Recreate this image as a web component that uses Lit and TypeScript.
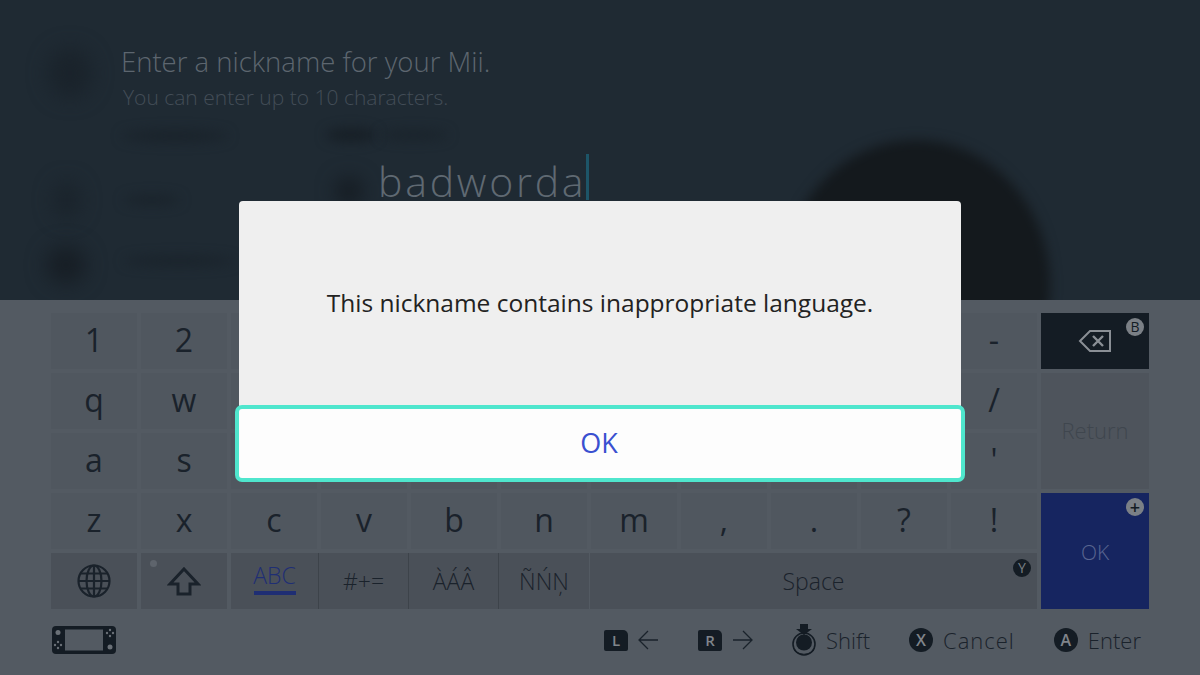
import { LitElement, html, css } from "lit";
import { customElement } from "lit/decorators.js";

const rows = [
  ["1","2","3","4","5","6","7","8","9","0","-"],
  ["q","w","e","r","t","y","u","i","o","p","/"],
  ["a","s","d","f","g","h","j","k","l",":","'"],
  ["z","x","c","v","b","n","m",",",".","?","!"],
];

const globe = html`<svg width="36" height="36" viewBox="0 0 36 36" fill="none" stroke="#1a222b" stroke-width="2.2"><circle cx="18" cy="18" r="15.5"/><ellipse cx="18" cy="18" rx="7.5" ry="15.5"/><path d="M18 2.5v31M4.500 10.500h27M2.500 18h31M4.500 25.500h27"/></svg>`;
const shift = html`<svg width="34" height="30" viewBox="0 0 34 30" fill="none" stroke="#1a222b" stroke-width="3" stroke-linejoin="miter"><path d="M17 3 31 18H23V28H11V18H3Z"/></svg>`;
const back = html`<svg width="34" height="24" viewBox="0 0 34 24" fill="none" stroke="#8a8f95" stroke-width="2"><path d="M32 2H12L2 12l10 10h20Z"/><path d="M15 7l10 10M25 7 15 17" stroke-width="2.4"/></svg>`;
const device = html`<svg width="66" height="30" viewBox="0 0 66 30"><rect x="1" y="1" width="64" height="28" rx="4" fill="#141c24"/><rect x="14" y="4.500" width="38" height="21" fill="#535a62"/><g fill="#6a7077"><circle cx="7" cy="7.500" r="2.500"/><circle cx="59" cy="22" r="2.500"/><circle cx="7" cy="17" r="1.200"/><circle cx="4" cy="20" r="1.200"/><circle cx="10" cy="20" r="1.200"/><circle cx="7" cy="23" r="1.200"/><circle cx="59" cy="5" r="1.200"/><circle cx="56" cy="8" r="1.200"/><circle cx="62" cy="8" r="1.200"/><circle cx="59" cy="11" r="1.200"/></g></svg>`;
const left = html`<svg width="21" height="20" viewBox="0 0 21 20" fill="none" stroke="#1a222b" stroke-width="1.300"><path d="M20 10H1M10 1 1 10l9 9"/></svg>`;
const right = html`<svg width="21" height="20" viewBox="0 0 21 20" fill="none" stroke="#1a222b" stroke-width="1.300"><path d="M1 10h19M11 1l9 9-9 9"/></svg>`;
const ring = html`<svg width="24" height="32" viewBox="0 0 24 32"><path d="M8 0h8v5h4l-8 6-8-6h4Z" fill="#141c24"/><circle cx="12" cy="20" r="11" fill="none" stroke="#141c24" stroke-width="1.600"/><circle cx="12" cy="18.500" r="8" fill="#141c24"/><path d="M2 25a11 8 0 0 0 20 0v1.500a11 6 0 0 1-20 0Z" fill="#141c24"/></svg>`;

@customElement("app-root")
export class AppRoot extends LitElement {
  static styles = css`
    :host { display: block; width: 1200px; height: 675px; overflow: hidden; position: relative; font-family: "Open Sans", "Noto Sans", sans-serif; }
    .top { height: 300px; background: #1f2a33; position: relative; overflow: hidden; box-sizing: border-box; padding: 42px 0 0 121px; }
    .blob { position: absolute; background: #1a232b; border-radius: 50%; filter: blur(10px); }
    .b1 { left: 48px; top: 48px; width: 44px; height: 50px; }
    .b2 { left: 54px; top: 182px; width: 26px; height: 36px; }
    .b3 { left: 46px; top: 246px; width: 40px; height: 38px; background: #171e25; }
    .b4 { left: 122px; top: 130px; width: 106px; height: 12px; filter: blur(6px); }
    .b5 { left: 326px; top: 128px; width: 50px; height: 14px; filter: blur(6px); background: #171f26; }
    .b9 { left: 380px; top: 130px; width: 68px; height: 10px; filter: blur(6px); }
    .b6 { left: 124px; top: 195px; width: 56px; height: 10px; filter: blur(6px); }
    .b7 { left: 124px; top: 256px; width: 110px; height: 10px; filter: blur(6px); }
    .b8 { left: 336px; top: 178px; width: 26px; height: 26px; background: #141a20; }
    .mii { left: 782px; top: 140px; width: 268px; height: 290px; background: #14191d; filter: blur(6px); }
    .title { position: relative; font-size: 27.5px; font-weight: 300; line-height: 40px; color: #5d666f; }
    .sub { position: relative; font-size: 21px; font-weight: 300; line-height: 28px; color: #434d57; margin: 1px 0 0 2px; }
    .input { position: absolute; left: 378px; top: 154px; display: flex; height: 46px; }
    .word { font-size: 41px; font-weight: 300; line-height: 54px; color: #5f6972; letter-spacing: 2.75px; }
    .caret { width: 3px; height: 46px; background: #1d5568; }
    .kb { height: 375px; background: #535a62; box-sizing: border-box; padding: 13px 51px 0; display: flex; flex-direction: column; }
    .board { display: grid; grid-template-columns: repeat(11, 86px) 108px; grid-auto-rows: 56px; gap: 4px; }
    .key { background: #50575f; color: #1a222b; display: flex; align-items: center; justify-content: center; font-size: 32px; font-weight: 400; padding-bottom: 2px; box-sizing: border-box; position: relative; line-height: 1; }
    .fn { background: #4a5058; font-size: 23px; padding-bottom: 0; font-weight: 300; }
    .group { grid-column: span 4; display: grid; grid-template-columns: 87px 90px 90px 91px; margin-right: -2px; background: #4a5058; }
    .group .key { background: transparent; border-left: 1px solid #3d434a; }
    .group .key:first-child { border-left: 0; }
    .abc { flex-direction: column; color: #1f2e74; font-size: 23px; font-weight: 300; padding-bottom: 3px; gap: 4px; }
    .abc i { width: 42px; height: 4px; background: #1f2e74; }
    .space { grid-column: span 5; margin-left: -1px; }
    .del { background: #141c24; padding-bottom: 0; }
    .ret { grid-row: span 2; background: #4e545c; color: #3f464e; font-size: 22px; font-weight: 300; padding-bottom: 3px; }
    .ok { grid-row: span 2; background: #162560; color: #5a6590; font-size: 21px; font-weight: 300; padding: 3px 0 0; }
    .badge { position: absolute; width: 18px; height: 18px; border-radius: 50%; background: #7b8086; color: #141c24; font-size: 14px; font-weight: 400; display: flex; align-items: center; justify-content: center; top: 5px; right: 5px; }
    .plus { font-size: 18px; font-weight: 600; }
    .y { background: #141c24; color: #7b8086; right: 6px; top: 6px; }
    .dot { position: absolute; left: 9px; top: 7px; width: 7px; height: 7px; border-radius: 50%; background: #5e646c; }
    .foot { display: flex; align-items: center; height: 32px; margin-top: 15px; }
    .actions { margin-left: auto; display: flex; align-items: center; margin-right: 8px; color: #1a222b; font-size: 22px; font-weight: 300; }
    .act { display: flex; align-items: center; gap: 10px; }
    .act + .act { margin-left: 39px; }
    .wide { letter-spacing: 1px; }
    .sq { width: 24px; height: 21px; background: #141c24; color: #80858b; border-radius: 2px 5px 2px 2px; font-size: 15px; font-weight: 600; display: flex; align-items: center; justify-content: center; }
    .cb { width: 24px; height: 24px; border-radius: 50%; background: #141c24; color: #80858b; font-size: 16px; font-weight: 600; display: flex; align-items: center; justify-content: center; }
    .modal { position: absolute; left: 239px; top: 201px; width: 722px; height: 275px; background: #efefef; border-radius: 4px; }
    .msg { height: 204px; display: flex; align-items: center; justify-content: center; font-size: 24.5px; color: #222; font-weight: 400; padding-bottom: 1px; box-sizing: border-box; }
    .btn { position: absolute; left: -4px; right: -4px; top: 204px; height: 66px; border: 4px solid #4fe6cd; border-radius: 7px; background: #fdfdfd; color: #3a50d0; font-size: 27px; padding: 0 2px 3px 0; display: flex; align-items: center; justify-content: center; }
  `;

  render() {
    return html`
      <div class="top">
        <div class="blob b1"></div><div class="blob b2"></div><div class="blob b3"></div>
        <div class="blob b4"></div><div class="blob b5"></div><div class="blob b9"></div><div class="blob b6"></div>
        <div class="blob b7"></div><div class="blob b8"></div><div class="blob mii"></div>
        <div class="title">Enter a nickname for your Mii.</div>
        <div class="sub">You can enter up to 10 characters.</div>
        <div class="input"><span class="word">badworda</span><span class="caret"></span></div>
      </div>
      <div class="kb">
        <div class="board">
          ${rows[0].map((k) => html`<div class="key">${k}</div>`)}
          <div class="key del">${back}<span class="badge">B</span></div>
          ${rows[1].map((k) => html`<div class="key">${k}</div>`)}
          <div class="key ret">Return</div>
          ${rows[2].map((k) => html`<div class="key">${k}</div>`)}
          ${rows[3].map((k) => html`<div class="key">${k}</div>`)}
          <div class="key ok">OK<span class="badge plus">+</span></div>
          <div class="key fn">${globe}</div>
          <div class="key fn">${shift}<span class="dot"></span></div>
          <div class="group">
            <div class="key abc">ABC<i></i></div>
            <div class="key fn">#+=</div>
            <div class="key fn">ÀÁÂ</div>
            <div class="key fn">ÑŃŅ</div>
          </div>
          <div class="key fn space">Space<span class="badge y">Y</span></div>
        </div>
        <div class="foot">
          ${device}
          <div class="actions">
            <div class="act"><span class="sq">L</span>${left}</div>
            <div class="act"><span class="sq">R</span>${right}</div>
            <div class="act">${ring}<span>Shift</span></div>
            <div class="act"><span class="cb">X</span><span class="wide">Cancel</span></div>
            <div class="act"><span class="cb">A</span><span>Enter</span></div>
          </div>
        </div>
      </div>
      <div class="modal">
        <div class="msg">This nickname contains inappropriate language.</div>
        <div class="btn">OK</div>
      </div>
    `;
  }
}
